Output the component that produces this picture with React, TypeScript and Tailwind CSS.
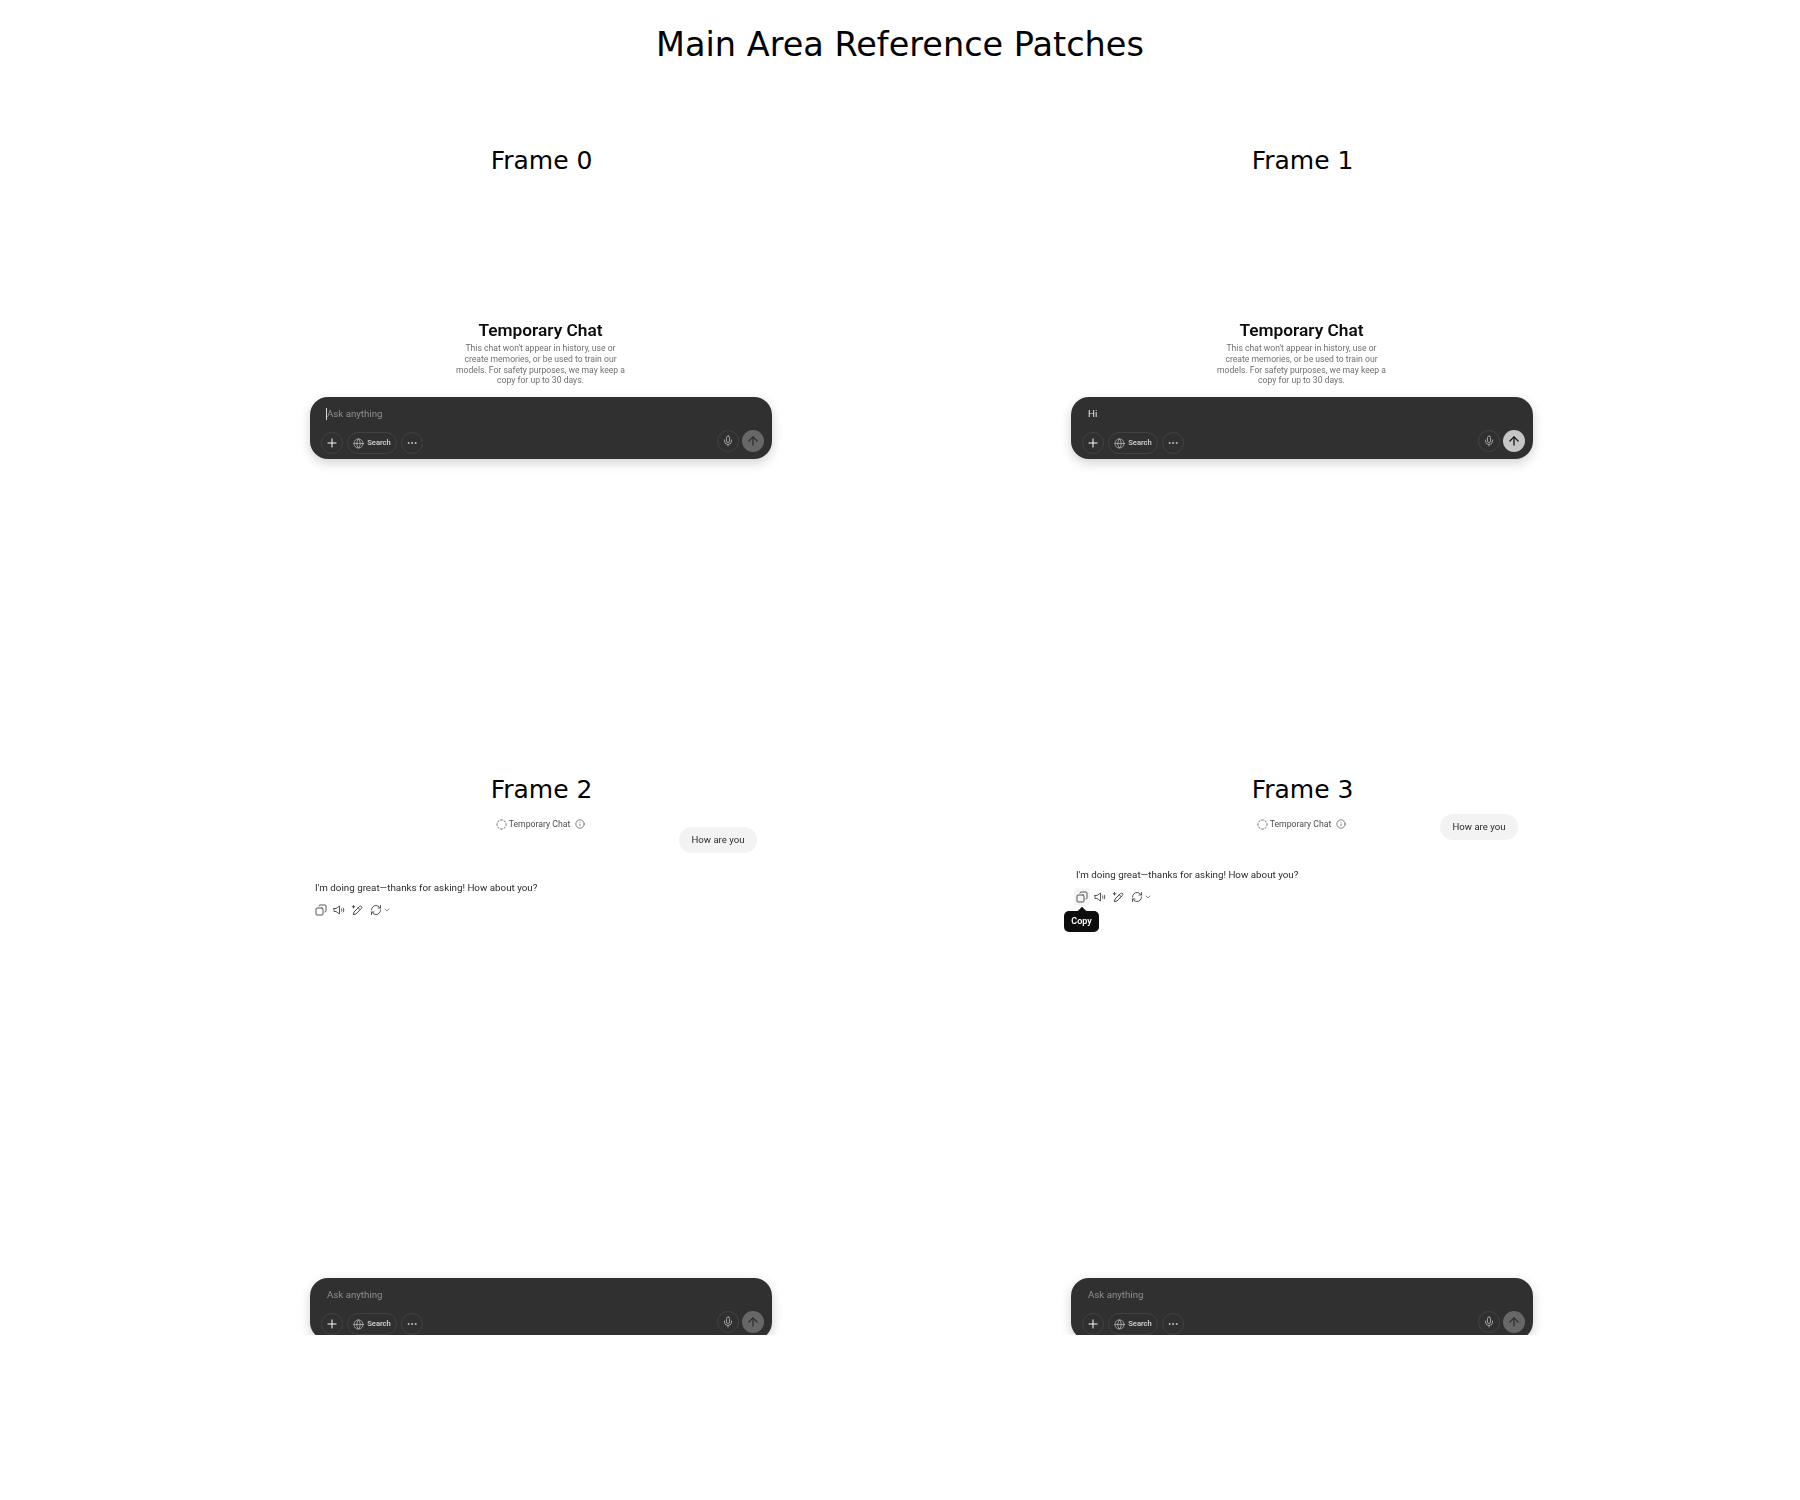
import { ArrowUp, ChevronDown, CircleDashed, Copy, Ellipsis, Globe, Info, Mic, Plus, RefreshCw } from "lucide-react";

const uiFont = "font-['Roboto','Noto_Sans',sans-serif]";

function Composer({ text, active, caret }: { text?: string; active?: boolean; caret?: boolean }) {
  return (
    <div className="h-[62px] w-[462px] shrink-0 ml-[20px] rounded-[18px] bg-[#303030] shadow-[0_4px_12px_rgba(0,0,0,0.18)] flex flex-col">
      <div className="h-[34px] pl-[17px] flex items-center">
        {caret && <span className="w-px h-[12px] -ml-px bg-[#d8d8d8]" />}
        {text ? (
          <span className="text-[9.700px] text-[#e4e4e4]">{text}</span>
        ) : (
          <span className="text-[9.700px] text-[#8e8e8e]">Ask anything</span>
        )}
      </div>
      <div className="mt-[1px] flex items-center pl-[11px] pr-[8px]">
        <div className="flex items-center gap-[4px]">
          <span className="w-[22px] h-[22px] rounded-full border border-[#424242] flex items-center justify-center">
            <Plus size={14} strokeWidth={1.7} color="#ffffff" />
          </span>
          <span className="w-[50px] h-[22px] rounded-full border border-[#424242] flex items-center justify-center gap-[3px] text-[7.600px] font-semibold text-[#cfcfcf]">
            <Globe size={11} strokeWidth={1.4} color="#cfcfcf" />
            Search
          </span>
          <span className="w-[22px] h-[22px] rounded-full border border-[#424242] flex items-center justify-center">
            <Ellipsis size={12} strokeWidth={1.8} color="#cfcfcf" />
          </span>
        </div>
        <div className="ml-auto flex items-center gap-[3px] -mt-[4px]">
          <span className="w-[22px] h-[22px] rounded-full border border-[#424242] flex items-center justify-center">
            <Mic size={12} strokeWidth={1.7} color="#b4b4b4" />
          </span>
          <span className={`w-[22px] h-[22px] rounded-full flex items-center justify-center ${active ? "bg-[#c6c6c6]" : "bg-[#676767]"}`}>
            <ArrowUp size={14} strokeWidth={2.2} color={active ? "#111111" : "#2f2f2f"} />
          </span>
        </div>
      </div>
    </div>
  );
}

function Intro({ text, active, caret }: { text?: string; active?: boolean; caret?: boolean }) {
  return (
    <div className="h-full flex flex-col pt-[139px]">
      <h2 className="text-[17.300px] leading-[20px] font-semibold text-[#0d0d0d] text-center">Temporary Chat</h2>
      <p className="mt-[3px] mb-[11px] text-[8.600px] leading-[10.750px] text-[#6f6f6f] text-center">
        This chat won't appear in history, use or
        <br />
        create memories, or be used to train our
        <br />
        models. For safety purposes, we may keep a
        <br />
        copy for up to 30 days.
      </p>
      <Composer text={text} active={active} caret={caret} />
    </div>
  );
}

function SpeakerIcon() {
  return (
    <svg width="12" height="12" viewBox="0 0 24 24" fill="none" stroke="#4d4d4d" strokeWidth="1.900" strokeLinejoin="round" strokeLinecap="round">
      <path d="M2 9v6h4l7 5V4L6 9H2z" />
      <path d="M17 9.500c1 1.500 1 3.500 0 5" />
      <path d="M20.500 8c1.500 2.500 1.500 5.500 0 8" />
    </svg>
  );
}

function PenIcon() {
  return (
    <svg width="12" height="12" viewBox="0 0 24 24" fill="none" stroke="#4d4d4d" strokeWidth="2" strokeLinejoin="round" strokeLinecap="round">
      <path d="M5 21l1-5L17 5c1.200-1.200 2.800-1.200 4 0s.8 2.800-.4 4L10 20l-5 1z" />
      <path d="M14.500 7.500l4 4" />
      <path d="M5 3v5M2.500 5.500h5" />
    </svg>
  );
}

function Conversation({ scrolled, tooltip }: { scrolled?: boolean; tooltip?: boolean }) {
  return (
    <div className="relative h-full flex flex-col">
      <div className="absolute top-[8px] left-0 right-0 flex items-center justify-center text-[8.700px] leading-[12px] text-[#4d4d4d]">
        <CircleDashed size={11} strokeWidth={1.8} color="#4d4d4d" />
        <span className="ml-[2px]">Temporary Chat</span>
        <Info size={10} strokeWidth={1.7} color="#4d4d4d" className="ml-[5px]" />
      </div>
      <div className={`flex flex-col pl-[25px] pr-[34px] ${scrolled ? "pt-[4px]" : "pt-[17px]"}`}>
        <div className="self-end h-[26px] w-[78px] rounded-[13px] bg-[#f3f3f3] flex items-center justify-center text-[9.600px] text-[#2b2b2b]">
          How are you
        </div>
        <p className="mt-[28px] text-[9.800px] leading-[14px] text-[#2b2b2b]">I'm doing great—thanks for asking! How about you?</p>
        <div className="mt-[7px] h-[16px] flex items-center gap-[6px]">
          <span className="relative w-[12px] h-[12px]">
            {tooltip && <span className="absolute -left-[2px] -top-[3px] w-[16px] h-[18px] rounded-[4px] bg-[#f5f5f5]" />}
            <Copy size={12} strokeWidth={1.900} color="#4d4d4d" className="relative -scale-x-100" />
            {tooltip && (
              <span className="absolute top-[20px] -left-[12px] z-10 w-[35px] h-[21px] rounded-[5px] bg-[#0d0d0d] flex items-center justify-center text-[9px] font-semibold text-white">
                <span className="absolute -top-[3px] left-1/2 -translate-x-1/2 w-[6px] h-[6px] rotate-45 bg-[#0d0d0d]" />
                <span className="relative">Copy</span>
              </span>
            )}
          </span>
          <SpeakerIcon />
          <PenIcon />
          <span className="ml-[1px] flex items-center gap-[1px]">
            <RefreshCw size={12} strokeWidth={1.900} color="#4d4d4d" />
            <ChevronDown size={8} strokeWidth={2} color="#4d4d4d" />
          </span>
        </div>
      </div>
      <div className="mt-auto -mb-[5px]">
        <Composer />
      </div>
    </div>
  );
}

function Frame({ label, children }: { label: string; children: React.ReactNode }) {
  return (
    <div className="flex flex-col items-center">
      <div className="h-[28px] mb-[7px] pl-[2px] text-[25px] leading-[30px] text-black font-['DejaVu_Sans',sans-serif]">{label}</div>
      <div className={`w-[501px] h-[525px] overflow-hidden bg-white blur-[0.35px] ${uiFont}`}>{children}</div>
    </div>
  );
}

export default function App() {
  return (
    <div className="w-[1800px] h-[1500px] bg-white flex flex-col">
      <h1 className="h-[146px] pt-[24px] text-center text-[33.500px] leading-[42px] text-black font-['DejaVu_Sans',sans-serif]">
        Main Area Reference Patches
      </h1>
      <div className="ml-[160px] grid grid-cols-[761px_761px] gap-y-[69px]">
        <Frame label="Frame 0">
          <Intro caret />
        </Frame>
        <Frame label="Frame 1">
          <Intro text="Hi" active />
        </Frame>
        <Frame label="Frame 2">
          <Conversation />
        </Frame>
        <Frame label="Frame 3">
          <Conversation scrolled tooltip />
        </Frame>
      </div>
    </div>
  );
}
